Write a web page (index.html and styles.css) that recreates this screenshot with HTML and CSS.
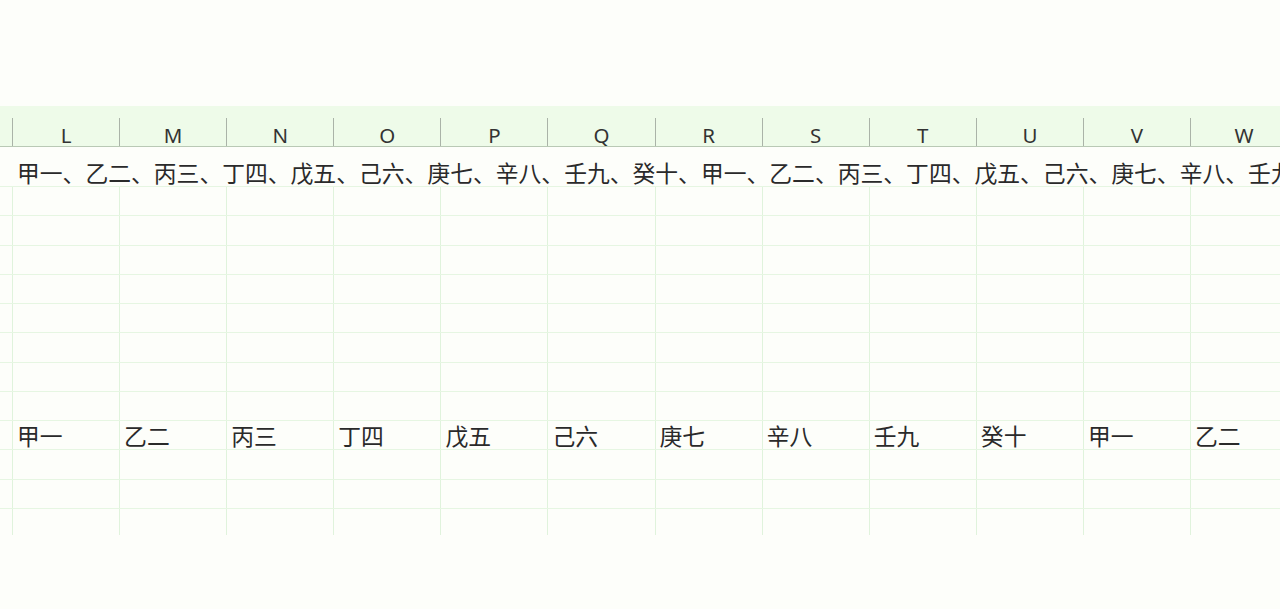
FILE: index.html
```html
<!DOCTYPE html>
<html lang="zh-CN">
<head>
  <meta charset="UTF-8">
  <title>工作表</title>
  <link rel="stylesheet" href="styles.css">
</head>
<body>
  <div class="sheet">
    <div class="col-head">
      <div class="gutter"></div>
      <div class="col">L</div>
      <div class="col">M</div>
      <div class="col">N</div>
      <div class="col">O</div>
      <div class="col">P</div>
      <div class="col">Q</div>
      <div class="col">R</div>
      <div class="col">S</div>
      <div class="col">T</div>
      <div class="col">U</div>
      <div class="col">V</div>
      <div class="col">W</div>
    </div>

    <!-- long text spills over the neighbouring empty cells -->
    <div class="row row-tall">
      <div class="spill">甲一、乙二、丙三、丁四、戊五、己六、庚七、辛八、壬九、癸十、甲一、乙二、丙三、丁四、戊五、己六、庚七、辛八、壬九、癸十</div>
    </div>

    <div id="rows"></div>
  </div>

  <script>
    const values = ['甲一', '乙二', '丙三', '丁四', '戊五', '己六', '庚七', '辛八', '壬九', '癸十', '甲一', '乙二'];
    const rows = document.getElementById('rows');

    // 8 empty rows, the split row, then 3 more empty ones
    for (let r = 0; r < 12; r++) {
      const row = document.createElement('div');
      row.className = r === 11 ? 'row row-last' : 'row';
      row.innerHTML = '<div class="gutter"></div>';
      for (let c = 0; c < 12; c++) {
        const cell = document.createElement('div');
        cell.className = 'cell';
        if (r === 8) cell.textContent = values[c];
        row.appendChild(cell);
      }
      rows.appendChild(row);
    }
  </script>
</body>
</html>
```

FILE: styles.css
```css
* {
  box-sizing: border-box;
}

html, body {
  margin: 0;
  height: 100%;
}

body {
  background: #fdfefa;
  overflow: hidden;
  font-family: "Noto Sans CJK SC", "Noto Sans", sans-serif;
  color: #2a2a2a;
}

.sheet {
  margin-top: 106px;
  width: 1280px;
  overflow: hidden;
}

.col-head {
  display: flex;
  height: 41px;
  padding-top: 12px;
  background: #eefbe9;
  border-bottom: 1px solid #b9c9b5;
}

.gutter {
  flex: 0 0 12px;
}

.col {
  flex: 0 0 107.1px;
  border-left: 1px solid #aab3a8;
  text-align: center;
  font-family: "Noto Sans", sans-serif;
  font-size: 20.5px;
  line-height: 28px;
  padding-top: 3px;
  color: #333;
}

.row {
  display: flex;
  height: 29.25px;
  border-bottom: 1px solid #e6f6e2;
}

.row-tall {
  height: 40px;
  align-items: flex-end;
}

.row-last {
  height: 26px;
  border-bottom: none;
}

.spill {
  padding-left: 17px;
  font-size: 22.8px;
  line-height: 27px;
  white-space: nowrap;
}

.cell {
  flex: 0 0 107.1px;
  border-left: 1px solid #e0f3dc;
  padding-left: 4px;
  padding-top: 1px;
  font-size: 22.8px;
  line-height: 28px;
  white-space: nowrap;
}
```
